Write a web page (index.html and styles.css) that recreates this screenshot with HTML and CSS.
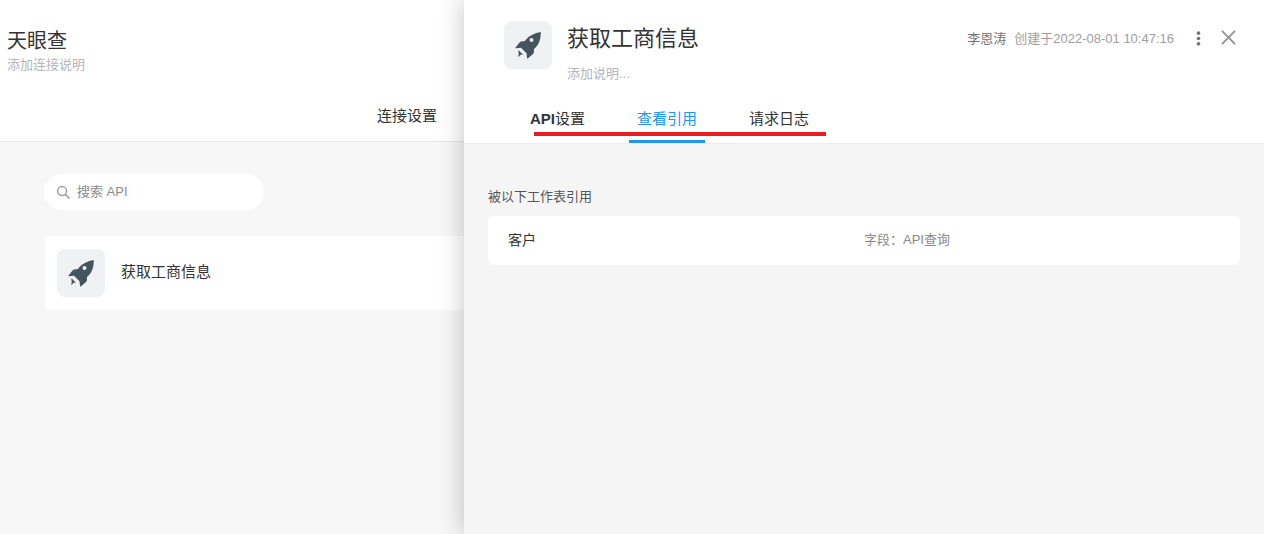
FILE: index.html
```html
<!DOCTYPE html>
<html lang="zh-CN">
<head>
<meta charset="utf-8">
<title>获取工商信息</title>
<link rel="stylesheet" href="styles.css">
</head>
<body>
<div class="page">
  <header class="page-head">
    <div class="page-title">天眼查</div>
    <div class="page-desc">添加连接说明</div>
    <nav class="page-tabs"><span>连接设置</span></nav>
  </header>
  <main class="page-body">
    <div class="search">
      <svg class="search-icon" viewBox="0 0 16 16"><circle cx="6.5" cy="6.5" r="4.8"/><path d="M10 10 14.500 14.500"/></svg>
      <span class="search-text">搜索 API</span>
    </div>
    <div class="api-card">
      <div class="icon-box">
        <svg class="rocket" viewBox="0 0 26 28"><path fill-rule="evenodd" d="M25.800 1C19.500 2 14.500 4.500 11 8.500L10 10l-3.500.5c-1 .1-1.500.5-2 1.100L.6 16.500c-.3.5 0 .8.4.8l5-.5 5.500 5.400.5 4.600c0 .6.5.8 1 .4l5-4.200c.6-.5.8-1 .9-2l.1-3c4.800-4 6.800-9 6.800-17ZM16.500 7a2 2 0 1 1 0 4 2 2 0 0 1 0-4Z"/><path d="M3.800 19.500 8 23.700l-2.300.1-2.500 2.500.5-3-.4-3.800Z"/></svg>
      </div>
      <span class="api-name">获取工商信息</span>
    </div>
  </main>
</div>

<aside class="drawer">
  <header class="drawer-head">
    <div class="drawer-top">
      <div class="icon-box">
        <svg class="rocket" viewBox="0 0 26 28"><path fill-rule="evenodd" d="M25.800 1C19.500 2 14.500 4.500 11 8.500L10 10l-3.500.5c-1 .1-1.500.5-2 1.100L.6 16.500c-.3.5 0 .8.4.8l5-.5 5.500 5.400.5 4.600c0 .6.5.8 1 .4l5-4.200c.6-.5.8-1 .9-2l.1-3c4.800-4 6.800-9 6.800-17ZM16.500 7a2 2 0 1 1 0 4 2 2 0 0 1 0-4Z"/><path d="M3.800 19.500 8 23.700l-2.300.1-2.500 2.500.5-3-.4-3.800Z"/></svg>
      </div>
      <div class="drawer-titles">
        <div class="drawer-title">获取工商信息</div>
        <div class="drawer-desc">添加说明...</div>
      </div>
      <div class="drawer-meta">
        <span class="owner">李恩涛</span>
        <span class="created">创建于2022-08-01 10:47:16</span>
        <svg class="more" viewBox="0 0 4 14"><circle cx="2" cy="2" r="1.700"/><circle cx="2" cy="7" r="1.700"/><circle cx="2" cy="12" r="1.700"/></svg>
        <svg class="close" viewBox="0 0 16 16"><path d="M1 1 15 15M15 1 1 15"/></svg>
      </div>
    </div>
    <nav class="drawer-tabs">
      <span class="tab"><b class="tab-latin">API</b>设置</span>
      <span class="tab tab-active">查看引用</span>
      <span class="tab">请求日志</span>
    </nav>
    <div class="annotation"></div>
  </header>
  <section class="drawer-body">
    <div class="ref-label">被以下工作表引用</div>
    <div class="ref-row">
      <span class="ref-name">客户</span>
      <span class="ref-field">字段：API查询</span>
    </div>
  </section>
</aside>
</body>
</html>
```
FILE: styles.css
```css
* { box-sizing: border-box; }
html, body { margin: 0; height: 100%; }
body {
  width: 1264px;
  height: 534px;
  overflow: hidden;
  position: relative;
  background: #f7f7f7;
  color: #333;
  font-family: "Liberation Sans", "Noto Sans CJK SC", sans-serif;
}
.page { height: 100%; display: flex; flex-direction: column; }
.page-head {
  height: 142px;
  background: #fff;
  border-bottom: 1px solid #e6e6e6;
  padding: 27px 7px 0;
  position: relative;
}
.page-title { font-size: 20px; line-height: 28px; color: #333; }
.page-desc { font-size: 13px; line-height: 18px; margin-top: 1px; color: #b5b5b5; }
.page-tabs {
  margin-top: 31px;
  padding-left: 370px;
  font-size: 15px;
  line-height: 22px;
}
.page-body { padding: 32px 0 0 44px; flex: 1; }
.search {
  width: 220px;
  height: 36px;
  border-radius: 18px;
  background: #fff;
  display: flex;
  align-items: center;
  padding-left: 12px;
  font-size: 13px;
  color: #8c8c8c;
}
.search-text { padding-bottom: 4px; }
.search-icon {
  width: 15px;
  height: 15px;
  margin-right: 6px;
  fill: none;
  stroke: #9e9e9e;
  stroke-width: 1.600;
}
.api-card {
  margin: 26px 0 0 1px;
  height: 74px;
  background: #fff;
  border-radius: 4px;
  display: flex;
  align-items: center;
  padding-left: 12px;
}
.api-name { font-size: 15px; margin-left: 16px; padding-bottom: 6px; }
.icon-box {
  width: 48px;
  height: 48px;
  flex: none;
  border-radius: 8px;
  background: #eff1f3;
  display: flex;
  align-items: center;
  justify-content: center;
}
.rocket { width: 26px; height: 28px; fill: #455560; }
.drawer {
  position: absolute;
  left: 464px;
  top: 0;
  width: 800px;
  height: 534px;
  background: #f5f5f5;
  box-shadow: 0 0 24px rgba(0, 0, 0, .24);
  display: flex;
  flex-direction: column;
}
.drawer-head {
  height: 144px;
  background: #fff;
  border-bottom: 1px solid #ececec;
  position: relative;
}
.drawer-top { display: flex; padding: 21px 28px 0 40px; height: 93px; }
.drawer-titles { margin-left: 15px; }
.drawer-title { font-size: 22px; line-height: 32px; margin-top: 2px; color: #333; }
.drawer-desc { font-size: 13px; line-height: 18px; margin-top: 10px; color: #b5b5b5; }
.drawer-meta {
  margin-left: auto;
  height: 32px;
  display: flex;
  align-items: center;
  font-size: 13px;
}
.owner { color: #757575; }
.created { color: #9e9e9e; margin-left: 8px; }
.more { width: 5px; height: 15px; margin-left: 22px; margin-top: 2px; fill: #757575; }
.close {
  width: 15px;
  height: 15px;
  margin-left: 20px;
  fill: none;
  stroke: #8f8f8f;
  stroke-width: 1.800;
}
.drawer-tabs { display: flex; gap: 36px; padding-left: 58px; height: 50px; }
.tab {
  height: 50px;
  padding: 15px 8px 0;
  font-size: 15px;
  line-height: 22px;
  color: #333;
  border-bottom: 3px solid transparent;
}
.tab-latin { font-weight: 700; }
.tab-active { color: #2196f3; border-bottom-color: #2196f3; }
.annotation {
  position: absolute;
  left: 70px;
  top: 132px;
  width: 292px;
  height: 4px;
  background: #ed1c24;
}
.drawer-body { flex: 1; padding: 44px 24px 0; }
.ref-label { font-size: 13px; line-height: 18px; color: #555; }
.ref-row {
  margin-top: 10px;
  height: 49px;
  background: #fff;
  border-radius: 6px;
  display: flex;
  align-items: center;
  padding-left: 20px;
}
.ref-name { font-size: 14px; width: 356px; padding-bottom: 4px; }
.ref-field { font-size: 13px; color: #8a8a8a; padding-bottom: 4px; }
```
